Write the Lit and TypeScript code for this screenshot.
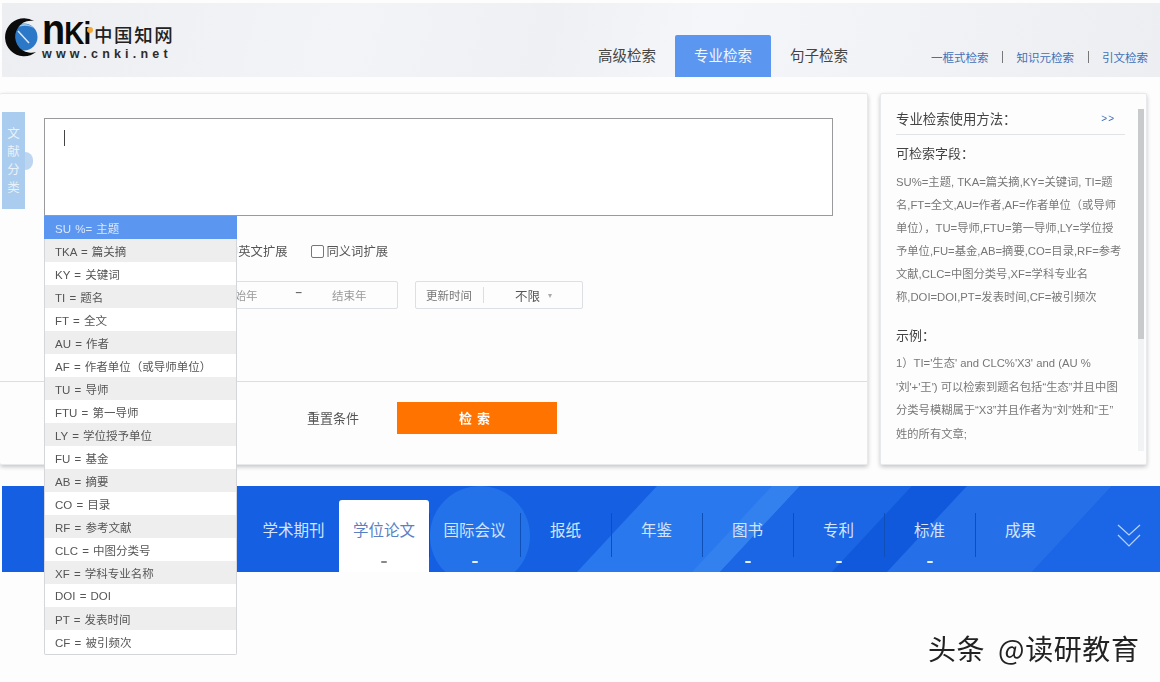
import { LitElement, html, css } from "lit";
import { customElement } from "lit/decorators.js";

const fields = [
  "SU %= 主题", "TKA = 篇关摘", "KY = 关键词", "TI = 题名", "FT = 全文", "AU = 作者",
  "AF = 作者单位（或导师单位）", "TU = 导师", "FTU = 第一导师", "LY = 学位授予单位",
  "FU = 基金", "AB = 摘要", "CO = 目录", "RF = 参考文献", "CLC = 中图分类号",
  "XF = 学科专业名称", "DOI = DOI", "PT = 发表时间", "CF = 被引频次",
];
const fieldLines = [
  "SU%=主题, TKA=篇关摘,KY=关键词, TI=题",
  "名,FT=全文,AU=作者,AF=作者单位（或导师",
  "单位），TU=导师,FTU=第一导师,LY=学位授",
  "予单位,FU=基金,AB=摘要,CO=目录,RF=参考",
  "文献,CLC=中图分类号,XF=学科专业名",
  "称,DOI=DOI,PT=发表时间,CF=被引频次",
];
const exampleLines = [
  "1）TI='生态' and CLC%'X3' and (AU %",
  "'刘'+'王') 可以检索到题名包括“生态”并且中图",
  "分类号模糊属于“X3”并且作者为“刘”姓和“王”",
  "姓的所有文章;",
];
const dbs: [string, boolean, boolean][] = [
  ["学术期刊", false, false], ["学位论文", true, true], ["国际会议", false, true],
  ["报纸", false, false], ["年鉴", false, false], ["图书", false, true],
  ["专利", false, true], ["标准", false, true], ["成果", false, false],
];

@customElement("app-root")
export class AppRoot extends LitElement {
  static styles = css`
    :host { display: block; width: 1160px; height: 682px; overflow: hidden; background: #fdfdfe; position: relative;
      font-family: "Liberation Sans", "Noto Sans CJK SC", sans-serif; color: #555; }
    .page { display: flex; flex-direction: column; height: 682px; filter: blur(0.5px); }

    header { margin: 3px 0 0 2px; height: 74px; display: flex; align-items: flex-end; padding-right: 12px;
      background: linear-gradient(105deg, #edeef2 0%, #f3f4f7 30%, #eef0f4 47%, #f5f6f9 60%, #eceef2 100%); }
    .logo { display: flex; flex-direction: column; margin: 0 auto 0 0; align-self: flex-start; position: relative; width: 175px; height: 74px; }
    .logo-top { display: flex; align-items: flex-end; height: 44px; margin-left: 40px; }
    .nki { font-weight: 700; color: #0a0a0a; font-size: 31px; line-height: 33px; letter-spacing: -1px; display: inline-flex; align-items: baseline; width: 52px; transform: scaleX(.9); transform-origin: left; position: relative; top: 3px; white-space: nowrap; }
    .nki .n { font-size: 42px; letter-spacing: -1px; }
    .cn { font-family: "Noto Sans CJK SC", sans-serif; font-size: 18.5px; color: #222; letter-spacing: 1.6px; line-height: 24px; white-space: nowrap; margin-bottom: 1px; font-weight: 500; }
    .url { margin: 0 0 0 40px; font-size: 12.5px; font-weight: 700; color: #2c2c2c; letter-spacing: 4.2px; line-height: 14px; white-space: nowrap; }
    .globe { position: absolute; left: -1px; top: 12px; }
    .dot { position: absolute; left: 85px; top: 24px; width: 6px; height: 6px; border-radius: 50%; background: #f2a93b; }

    .tabs { display: flex; margin-right: 64px; }
    .tab { width: 96px; height: 42px; box-sizing: border-box; padding-bottom: 3px; display: flex; align-items: center; justify-content: center; font-size: 14.5px; color: #444; }
    .tab.on { background: #5b97f0; color: #f2f6ff; border-radius: 2px 2px 0 0; }
    .links { display: flex; align-items: center; gap: 13.5px; height: 40px; font-size: 11.5px; color: #3f70b8; white-space: nowrap; }
    .links i { width: 1px; height: 12px; background: #777; }

    .main { display: flex; gap: 12px; margin-top: 16px; align-items: stretch; height: 372px; }
    .card { background: #fdfdfe; border: 1px solid #e8e9ec; box-shadow: 0 2px 4px rgba(0,0,0,.22); border-radius: 2px; }
    .form { width: 868px; box-sizing: border-box; border-left: none; display: flex; flex-direction: column; position: relative; }
    .input { margin: 24px 0 0 44px; width: 789px; height: 98px; box-sizing: border-box; border: 1px solid #9a9a9c; background: #fff; padding: 11px 19px; }
    .caret { display: block; width: 1px; height: 16px; background: #444; }

    .opts { display: flex; align-items: center; height: 20px; margin: 25px 0 0 210px; font-size: 12.3px; color: #555; }
    .opt { display: flex; align-items: center; gap: 3px; margin-right: 23px; white-space: nowrap; }
    .box { display: inline-block; width: 11px; height: 11px; border: 1px solid #777; border-radius: 2px; background: #fff; }

    .filters { display: flex; gap: 17px; margin: 20px 0 0 200px; }
    .fbox { height: 28px; box-sizing: border-box; border: 1px solid #dcdfe3; border-radius: 2px; display: flex; align-items: center; font-size: 11.5px; color: #999; }
    .date { width: 198px; padding-left: 22px; }
    .date .sep { margin: -6px 0 0 38px; color: #666; font-weight: 700; }
    .date .end { margin-left: 30px; }
    .upd { width: 168px; color: #777; padding-left: 10px; }
    .upd .ln { width: 1px; height: 16px; background: #ddd; margin: 0 31px 0 11px; }
    .upd .val { font-size: 12.5px; color: #555; }
    .upd .cv { font-size: 8px; color: #aaa; margin-left: 8px; }

    .foot { margin-top: 72px; flex: 1; border-top: 1px solid #dcdde0; display: flex; align-items: center; padding: 0 0 11px 307px; gap: 38px; }
    .reset { font-size: 13px; color: #555; white-space: nowrap; }
    .go { width: 160px; height: 32px; background: #ff7300; color: #fff; font-weight: 700; font-size: 13px; letter-spacing: 5px; display: flex; align-items: center; justify-content: center; }

    .flap { position: absolute; left: 2px; top: 18px; width: 23px; height: 97px; background: #aaccee; color: #e8f2fb; font-size: 12.5px; line-height: 18px; text-align: center; display: flex; flex-direction: column; justify-content: center; }
    .flap::after { content: ""; position: absolute; left: 23px; top: 40px; width: 8px; height: 18px; border-radius: 0 9px 9px 0; background: #bcd5f0; }

    .help { width: 267px; box-sizing: border-box; position: relative; padding: 12px 15px; }
    .help-head { display: flex; justify-content: space-between; align-items: center; width: 229px; height: 24px; border-bottom: 1px solid #e2e3e6; padding-bottom: 4px; box-sizing: content-box; font-size: 13.4px; color: #444; white-space: nowrap; }
    .help-head b { font-weight: 400; font-size: 10px; color: #3f70b8; margin-right: 10px; letter-spacing: 1px; }
    .h4 { font-size: 13px; color: #444; line-height: 20px; margin-top: 9px; }
    .lines { margin-top: 7px; font-size: 11.3px; line-height: 23px; color: #777; white-space: nowrap; }
    .h4.ex { margin-top: 17px; }
    .lines.ex { margin-top: 6px; line-height: 23.6px; }
    .track { position: absolute; left: 257px; top: 15px; width: 6px; height: 342px; background: #f2f3f5; }
    .thumb { width: 6px; height: 230px; background: #c9cacc; }

    .band { margin: 21px 0 0 2px; height: 86px; position: relative; display: flex; align-items: flex-end; padding-left: 246px; background: #1560e2; overflow: hidden; }
    .band svg.bg { position: absolute; inset: 0; }
    .db { position: relative; width: 91px; height: 72px; box-sizing: border-box; display: flex; align-items: center; justify-content: center; padding-bottom: 14px; font-size: 15.5px; color: #d5e4fb; white-space: nowrap; }
    .db.sepd::before { content: ""; position: absolute; left: 0; top: 13px; height: 44px; width: 1px; background: #0f4fb8; }
    .db.on { background: #fff; color: #5b7fc4; border-radius: 3px 3px 0 0; width: 90px; }
    .db .tick { position: absolute; left: 50%; margin-left: -3px; bottom: 9px; width: 6px; height: 2px; background: #e6effc; border-radius: 1px; }
    .db.on .tick { background: #888; }
    .chev { position: absolute; left: 1115px; top: 37px; }

    .drop { position: absolute; left: 44px; top: 216px; width: 193px; box-sizing: border-box; background: #fff; border: 1px solid #d5d6d9; border-top: none; border-radius: 0 0 2px 2px; padding-bottom: 1px; filter: blur(0.5px); }
    .row { height: 23px; display: flex; align-items: center; padding-left: 10px; font-size: 11.5px; word-spacing: 1px; color: #555; white-space: pre; }
    .row:nth-child(even) { background: #eeeeee; }
    .row.on { background: #5b97f0; color: #dbe8fd; margin-left: -1px; margin-right: -1px; padding-left: 11px; }

    .mark { position: absolute; left: 928px; top: 631px; font-family: "Noto Sans CJK SC", sans-serif; font-size: 28px; line-height: 34px; letter-spacing: .6px; word-spacing: 6px; color: #222; white-space: nowrap; }
  `;

  render() {
    return html`
      <div class="page">
        <header>
          <div class="logo">
            <svg class="globe" width="40" height="42" viewBox="0 0 40 42">
              <circle cx="23" cy="22" r="13.5" fill="#2b78c8"/>
              <path d="M13 14 A13.5 13.5 0 0 1 33 13 A21 21 0 0 0 13 14Z" fill="#9cc7ea"/>
              <path d="M17 16 L28 28" stroke="#dbe9f6" stroke-width="1.5"/>
              <path d="M33 6 A19 19 0 1 0 35 37 A16 16 0 1 1 33 6Z" fill="#0b0b0b"/>
            </svg>
            <div class="logo-top">
              <span class="nki"><span class="n">n</span>Ki</span>
              <span class="cn">中国知网</span>
            </div>
            <div class="dot"></div>
            <div class="url">www.cnki.net</div>
          </div>
          <div class="tabs">
            <div class="tab">高级检索</div>
            <div class="tab on">专业检索</div>
            <div class="tab">句子检索</div>
          </div>
          <div class="links"><span>一框式检索</span><i></i><span>知识元检索</span><i></i><span>引文检索</span></div>
        </header>

        <div class="main">
          <section class="card form">
            <div class="flap"><span>文</span><span>献</span><span>分</span><span>类</span></div>
            <div class="input"><span class="caret"></span></div>
            <div class="opts">
              <label class="opt"><span class="box"></span>中英文扩展</label>
              <label class="opt"><span class="box"></span>同义词扩展</label>
            </div>
            <div class="filters">
              <div class="fbox date"><span>起始年</span><span class="sep">–</span><span class="end">结束年</span></div>
              <div class="fbox upd"><span>更新时间</span><span class="ln"></span><span class="val">不限</span><span class="cv">▾</span></div>
            </div>
            <div class="foot"><span class="reset">重置条件</span><div class="go">检索</div></div>
          </section>

          <aside class="card help">
            <div class="help-head"><span>专业检索使用方法：</span><b>&gt;&gt;</b></div>
            <div class="h4">可检索字段：</div>
            <div class="lines">${fieldLines.map((l) => html`<div>${l}</div>`)}</div>
            <div class="h4 ex">示例：</div>
            <div class="lines ex">${exampleLines.map((l) => html`<div>${l}</div>`)}</div>
            <div class="track"><div class="thumb"></div></div>
          </aside>
        </div>

        <nav class="band">
          <svg class="bg" width="1158" height="86" viewBox="0 0 1158 86">
            <circle cx="478" cy="50" r="50" fill="#2472ea"/>
            <polygon points="655,0 798,0 718,86 575,86" fill="#2a78ee"/>
            <polygon points="770,0 798,0 718,86 690,86" fill="#3a86f0" opacity=".6"/>
            <polygon points="798,0 910,0 830,86 718,86" fill="#1a66e4"/>
            <polygon points="910,0 965,0 885,86 830,86" fill="#1159dc"/>
            <polygon points="965,0 1110,0 1030,86 885,86" fill="#2570e8"/>
            <polygon points="1110,0 1158,0 1158,86 1030,86" fill="#1a66e6"/>
          </svg>
          ${dbs.map(
            ([name, on, tick], i) => html`<div class="db ${on ? "on" : ""} ${i > 1 ? "sepd" : ""}">
              ${name}${tick ? html`<span class="tick"></span>` : ""}
            </div>`
          )}
          <svg class="chev" width="24" height="26" viewBox="0 0 24 26" fill="none" stroke="#b9d3fb" stroke-width="1.2">
            <path d="M1 2 L12 12 L23 2"/><path d="M1 12 L12 23 L23 12"/>
          </svg>
        </nav>
      </div>

      <div class="drop">
        ${fields.map((f, i) => html`<div class="row ${i === 0 ? "on" : ""}">${f}</div>`)}
      </div>
      <div class="mark">头条 @读研教育</div>
    `;
  }
}
